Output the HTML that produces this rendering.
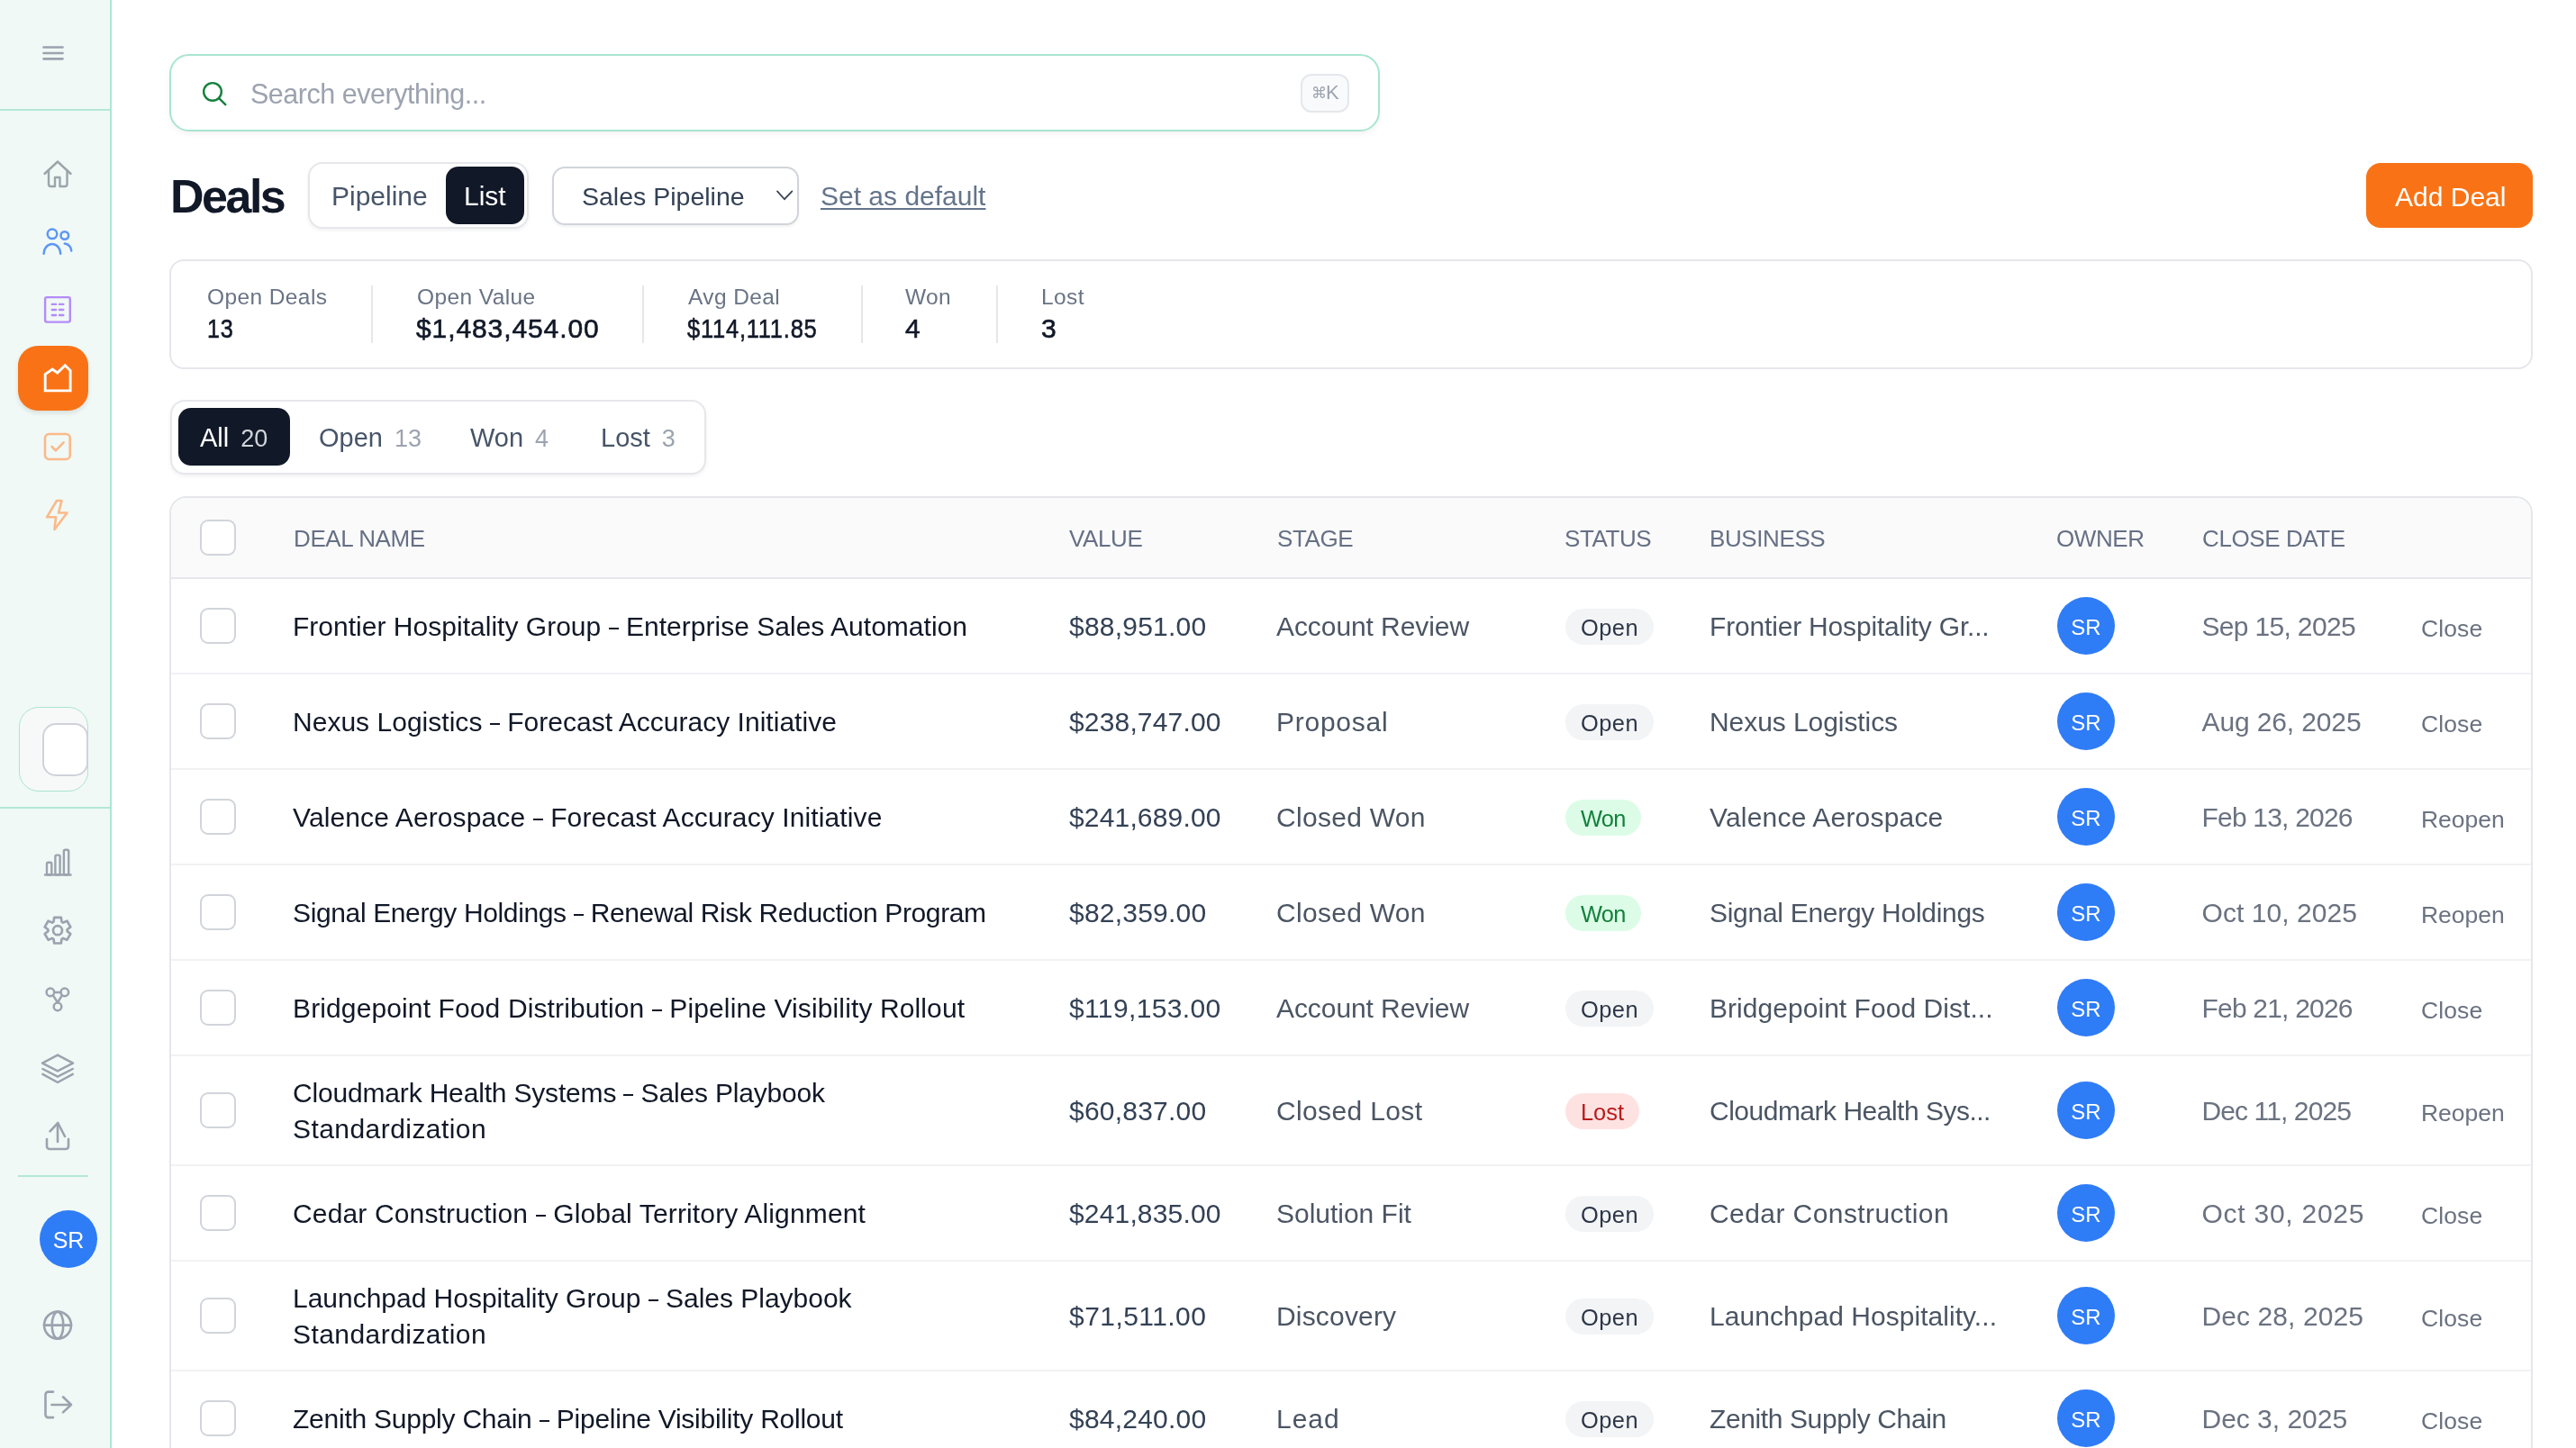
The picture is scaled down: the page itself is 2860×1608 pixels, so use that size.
<!DOCTYPE html>
<html><head><meta charset="utf-8">
<style>
*{box-sizing:border-box;margin:0;padding:0}
html,body{width:2860px;height:1608px;overflow:hidden;background:#fff;font-family:"Liberation Sans",sans-serif;color:#111827}
.abs{position:absolute}
.t{position:absolute;white-space:nowrap;line-height:1}
#side{position:absolute;left:0;top:0;width:124px;height:1608px;background:#f0f9f5;border-right:2px solid #abe7d3}
.ic{position:absolute;width:40px;height:40px;left:44px}
.ic svg{width:40px;height:40px;display:block;fill:none;stroke-width:2;stroke-linecap:round;stroke-linejoin:round}
.row{position:absolute;left:190px;width:2620px;border-bottom:2px solid #f1f2f4;background:#fff}
.row>*{position:absolute}
.tx{white-space:nowrap;line-height:40px;font-size:30px;margin-top:0.7px}
.d{display:inline-block;width:11px;height:2.6px;background:currentColor;margin-bottom:6.5px}
.cb{left:32px;width:40px;height:40px;border:2px solid #d1d5db;border-radius:9px;background:#fff}
.nm{left:135px;color:#111827}
.val{left:997px;color:#334155}
.stg{left:1227px;color:#4b5563}
.bus{left:1708px;color:#4b5563}
.dt{left:2254.5px;color:#6b7280}
.act{left:2498px;color:#6b7280;font-size:26.5px;margin-top:3px}
.badge{left:1548px;margin-top:1px;height:40px;line-height:43px;border-radius:20px;padding:0 17px;font-size:25.4px}
.badge.open{background:#f3f4f6;color:#2d3748;letter-spacing:0.5px}
.badge.won{background:#dcfce7;color:#15803d;letter-spacing:-0.75px}
.badge.lost{background:#fee2e2;color:#b91c1c}
.av{left:2094px;width:64px;height:64px;border-radius:50%;background:#2f7cf7;color:#fff;font-size:24px;line-height:68px;text-align:center}
.th{position:absolute;top:585px;font-size:26px;line-height:1;color:#667085;letter-spacing:-0.4px;margin-left:-1px;white-space:nowrap}
.sl{position:absolute;top:318px;font-size:24.5px;line-height:1;color:#687384;letter-spacing:0.4px;white-space:nowrap}
.sv{position:absolute;top:350px;font-size:30px;line-height:1;color:#111827;-webkit-text-stroke:0.6px #111827;letter-spacing:0.9px;white-space:nowrap}
.n1{font-style:normal;margin:0 -2.5px}
.sd{position:absolute;top:317px;width:2px;height:64px;background:#e5e7eb}
.tab{position:absolute;top:471.5px;font-size:29px;line-height:1;color:#475569;white-space:nowrap}
.tab span{font-size:27px;color:#9ca3af;margin-left:13px}
#wrap{position:absolute;left:0;top:0;width:2860px;height:1608px;overflow:hidden;will-change:transform}
@media (max-width:2000px){html{zoom:0.5}}
</style></head><body><div id="wrap">
<div id="side">
  <div class="abs" style="left:0;top:121px;width:122px;height:2px;background:#b3e8d4"></div>
  <div class="abs" style="left:0;top:895.5px;width:122px;height:2px;background:#b3e8d4"></div>
  <div class="abs" style="left:20px;top:1305px;width:78px;height:2px;background:#b3e8d4"></div>
  <div class="abs" style="left:20.5px;top:784.5px;width:77px;height:94.5px;border-radius:22px;border:1.5px solid #a9e6cf;background:#f7f9f8"></div>
  <div class="abs" style="left:46.5px;top:802.5px;width:51px;height:59px;border-radius:15px;border:2px solid #cfd2da;background:#fff"></div>
  <div class="abs" style="left:20px;top:384px;width:78px;height:72px;border-radius:22px;background:#f97316;box-shadow:0 3px 5px rgba(0,0,0,0.10)"></div>
  <div class="abs" style="left:44px;top:1344px;width:64px;height:64px;border-radius:50%;background:#2f7cf7;color:#fff;font-size:25px;line-height:67px;text-align:center">SR</div>
  <svg class="abs" style="left:0;top:0" width="124" height="1608" viewBox="0 0 124 1608" fill="none" stroke-linecap="round" stroke-linejoin="round">
    <g stroke="#9ca3af" stroke-width="2.7"><path d="M48.5 52.5h21M48.5 59h21M48.5 65.3h21"/></g>
    <g stroke="#9aa5ab" stroke-width="2.4"><path d="M49.5 193 64 179.5 78.5 193"/><path d="M54 189v15.5a2.5 2.5 0 0 0 2.5 2.5H61v-10h5.5v10h5.5a2.5 2.5 0 0 0 2.5-2.5V189"/></g>
    <g stroke="#5e96f7" stroke-width="2.5"><circle cx="58" cy="259.8" r="5.3"/><circle cx="71.8" cy="261.5" r="4.3"/><path d="M48.6 281.8a9.3 10.8 0 0 1 18.6 0"/><path d="M71.8 270.5a8 8 0 0 1 7.4 8"/></g>
    <g stroke="#b48cf9" stroke-width="2.4"><rect x="50.1" y="330.1" width="27.7" height="27.5" rx="2"/><path d="M57.8 337.9h4.3M66 337.9h4.3M57.8 344h4.3M66 344h4.3M57.8 350h4.3M66 350h4.3"/></g>
    <g stroke="#fff" stroke-width="2.9" stroke-linejoin="miter" stroke-linecap="butt"><path d="M50.2 415.6 58.2 410.1 63.7 414 72.3 405.7 78.1 411.5V433.9H50.2Z"/></g>
    <g stroke="#fbb98a" stroke-width="2.6"><rect x="50" y="482" width="27.7" height="28" rx="4.5"/><path d="M57.6 496 61.9 500.3 70.6 491.3"/></g>
    <g stroke="#fbb98a" stroke-width="2.6"><path d="M52 574.3 63 556 68.5 556 65 569.5H74.5L60.5 588 62 574.3Z"/></g>
    <g stroke="#9ca3af" stroke-width="2.4"><path d="M50 971.5h28.5"/><rect x="52" y="957.8" width="5.3" height="13.7" rx="1.5"/><rect x="61.4" y="949.6" width="5.2" height="21.9" rx="1.5"/><rect x="70.9" y="943.8" width="5.3" height="27.7" rx="1.5"/></g>
    <g stroke="#9ca3af" stroke-width="2.7"><path d="M59.52 1023.59 L60.17 1018.90 L67.83 1018.90 L68.48 1023.59 L70.08 1024.52 L74.47 1022.73 L78.30 1029.37 L74.56 1032.28 L74.56 1034.12 L78.30 1037.03 L74.47 1043.67 L70.08 1041.88 L68.48 1042.81 L67.83 1047.50 L60.17 1047.50 L59.52 1042.81 L57.92 1041.88 L53.53 1043.67 L49.70 1037.03 L53.44 1034.12 L53.44 1032.28 L49.70 1029.37 L53.53 1022.73 L57.92 1024.52Z"/><circle cx="64" cy="1033.2" r="5"/></g>
    <g stroke="#9ca3af" stroke-width="2.5"><circle cx="55.9" cy="1101.9" r="4.3"/><circle cx="71.8" cy="1101.9" r="4.3"/><circle cx="64" cy="1117.9" r="4.3"/><path d="M60.2 1101.9h7.3M58.8 1105.2 63.8 1113M69 1105.2 64.2 1113"/></g>
    <g stroke="#9ca3af" stroke-width="2.5"><path d="M64 1171.6 47 1180.7 64 1189.4 81 1180.7Z"/><path d="M47.4 1187 64 1195.7 80.8 1187"/><path d="M47.4 1192.8 64 1202 80.8 1192.8"/></g>
    <g stroke="#9ca3af" stroke-width="2.6"><path d="M52 1265v8a3 3 0 0 0 3 3h18a3 3 0 0 0 3-3v-8"/><path d="M55.5 1256.3 64.3 1247 72 1262"/><path d="M64 1248v20"/></g>
    <g stroke="#9ca3af" stroke-width="2.6"><circle cx="64" cy="1471.6" r="15"/><path d="M49 1471.6h30"/><ellipse cx="64" cy="1471.6" rx="6.3" ry="15"/></g>
    <g stroke="#9ca3af" stroke-width="2.6"><path d="M59 1545.6h-5.5a3 3 0 0 0-3 3v22.5a3 3 0 0 0 3 3H59"/><path d="M57.4 1560h21.6M70 1551.3l9 8.7-9 8.4"/></g>
  </svg>
</div>

<!-- search -->
<div class="abs" style="left:188px;top:60px;width:1344px;height:86px;border:2.5px solid #a8e5cf;border-radius:22px;box-shadow:0 3px 6px rgba(0,0,0,0.05);background:#fff"></div>
<svg class="abs" style="left:200px;top:80px;width:70px;height:50px" viewBox="200 80 70 50" fill="none" stroke="#15803d" stroke-width="2.4" stroke-linecap="round"><circle cx="236" cy="101.9" r="9.8"/><path d="M243.4 109.3 250.3 116.2"/></svg>
<div class="t" style="left:278px;top:89px;font-size:30.5px;color:#9ca3af;letter-spacing:-0.48px">Search everything...</div>
<div class="abs" style="left:1444px;top:82px;width:54px;height:43px;border:2px solid #e5e7eb;border-radius:12px;background:#f9fafb"></div>
<div class="t" style="left:1456px;top:92px;font-size:22px;color:#9ca3af;letter-spacing:-1px"><span style="font-size:17px;vertical-align:1px">⌘</span>K</div>

<!-- header -->
<div class="t" style="left:189px;top:192px;font-size:52px;font-weight:bold;letter-spacing:-2.5px">Deals</div>
<div class="abs" style="left:342px;top:179.5px;width:244.5px;height:74px;border:2px solid #e5e7eb;border-radius:16px;background:#fff;box-shadow:0 2px 4px rgba(0,0,0,0.06)"></div>
<div class="t" style="left:368px;top:202.6px;font-size:30px;color:#475569">Pipeline</div>
<div class="abs" style="left:495px;top:185px;width:87px;height:64px;border-radius:14px;background:#111827"></div>
<div class="t" style="left:515px;top:202.6px;font-size:30px;color:#fff">List</div>

<div class="abs" style="left:613px;top:184.5px;width:274px;height:65px;border:2px solid #d1d5db;border-radius:14px;background:#fff;box-shadow:0 2px 3px rgba(0,0,0,0.06)"></div>
<div class="t" style="left:646px;top:204px;font-size:28.5px;color:#334155">Sales Pipeline</div>
<svg class="abs" style="left:860px;top:207px;width:22px;height:20px" viewBox="0 0 22 20" fill="none" stroke="#374151" stroke-width="1.7" stroke-linecap="round"><path d="M3 5.4l8 8.8 8.4-8.8"/></svg>
<div class="t" style="left:911px;top:202.6px;font-size:30px;color:#64748b;text-decoration:underline;text-underline-offset:3px;text-decoration-thickness:2px">Set as default</div>

<div class="abs" style="left:2627px;top:181px;width:185px;height:72px;border-radius:16px;background:#f97316"></div>
<div class="t" style="left:2659px;top:203.6px;font-size:30px;color:#fff">Add Deal</div>

<!-- stats -->
<div class="abs" style="left:188px;top:288px;width:2624px;height:122px;border:2px solid #e5e7eb;border-radius:16px;background:#fff"></div>
<div class="sl" style="left:230px">Open Deals</div><div class="sv" style="left:230px;transform:scaleX(0.84);transform-origin:0 0">13</div>
<div class="sd" style="left:412px"></div>
<div class="sl" style="left:463px">Open Value</div><div class="sv" style="left:462px;letter-spacing:0.9px">$1,483,454.00</div>
<div class="sd" style="left:713px"></div>
<div class="sl" style="left:764px">Avg Deal</div><div class="sv" style="left:763px;transform:scaleX(0.85);transform-origin:0 0">$114,111.85</div>
<div class="sd" style="left:956px"></div>
<div class="sl" style="left:1005px">Won</div><div class="sv" style="left:1005px">4</div>
<div class="sd" style="left:1106px"></div>
<div class="sl" style="left:1156px">Lost</div><div class="sv" style="left:1156px">3</div>

<!-- tabs -->
<div class="abs" style="left:189px;top:444px;width:595px;height:83px;border:2px solid #e5e7eb;border-radius:16px;background:#fff;box-shadow:0 2px 4px rgba(0,0,0,0.06)"></div>
<div class="abs" style="left:198px;top:453px;width:124px;height:64px;border-radius:14px;background:#111827"></div>
<div class="tab" style="left:222px;color:#fff">All<span style="color:#d1d5db">20</span></div>
<div class="tab" style="left:354px">Open<span>13</span></div>
<div class="tab" style="left:522px">Won<span>4</span></div>
<div class="tab" style="left:667px">Lost<span>3</span></div>

<!-- table -->
<div class="abs" style="left:188px;top:551px;width:2624px;height:1100px;border:2px solid #e5e7eb;border-radius:19px;background:#fff;overflow:hidden">
  <div class="abs" style="left:0;top:0;width:2620px;height:90px;background:#fafafa;border-bottom:2px solid #e5e7eb"></div>
</div>
<div class="abs" style="left:222px;top:577px;width:40px;height:40px;border:2px solid #d1d5db;border-radius:9px;background:#fff"></div>
<div class="th" style="left:327px">DEAL NAME</div>
<div class="th" style="left:1188px">VALUE</div>
<div class="th" style="left:1419px">STAGE</div>
<div class="th" style="left:1738px">STATUS</div>
<div class="th" style="left:1899px">BUSINESS</div>
<div class="th" style="left:2284px">OWNER</div>
<div class="th" style="left:2446px">CLOSE DATE</div>

<div class="row" style="top:643px;height:106px">
<div class="cb" style="top:32.0px"></div>
<div class="tx nm" style="top:32.0px;letter-spacing:0.018px;">Frontier Hospitality Group <i class="d"></i> Enterprise Sales Automation</div>
<div class="tx val" style="top:32.0px;letter-spacing:0.222px;">$88,951.00</div>
<div class="tx stg" style="top:32.0px;letter-spacing:-0.077px;">Account Review</div>
<div class="badge open" style="top:32.0px">Open</div>
<div class="tx bus" style="top:32.0px;letter-spacing:-0.176px;">Frontier Hospitality Gr...</div>
<div class="av" style="top:20.0px">SR</div>
<div class="tx dt" style="top:32.0px;letter-spacing:-0.673px;">Sep 15, 2025</div>
<div class="tx act" style="top:32.0px;letter-spacing:0.100px;">Close</div>
</div>
<div class="row" style="top:749px;height:106px">
<div class="cb" style="top:32.0px"></div>
<div class="tx nm" style="top:32.0px;letter-spacing:0.022px;">Nexus Logistics <i class="d"></i> Forecast Accuracy Initiative</div>
<div class="tx val" style="top:32.0px;letter-spacing:0.160px;">$238,747.00</div>
<div class="tx stg" style="top:32.0px;letter-spacing:0.743px;">Proposal</div>
<div class="badge open" style="top:32.0px">Open</div>
<div class="tx bus" style="top:32.0px;letter-spacing:-0.071px;">Nexus Logistics</div>
<div class="av" style="top:20.0px">SR</div>
<div class="tx dt" style="top:32.0px;letter-spacing:-0.127px;">Aug 26, 2025</div>
<div class="tx act" style="top:32.0px;letter-spacing:0.100px;">Close</div>
</div>
<div class="row" style="top:855px;height:106px">
<div class="cb" style="top:32.0px"></div>
<div class="tx nm" style="top:32.0px;letter-spacing:0.115px;">Valence Aerospace <i class="d"></i> Forecast Accuracy Initiative</div>
<div class="tx val" style="top:32.0px;letter-spacing:0.160px;">$241,689.00</div>
<div class="tx stg" style="top:32.0px;letter-spacing:0.289px;">Closed Won</div>
<div class="badge won" style="top:32.0px">Won</div>
<div class="tx bus" style="top:32.0px;letter-spacing:0.188px;">Valence Aerospace</div>
<div class="av" style="top:20.0px">SR</div>
<div class="tx dt" style="top:32.0px;letter-spacing:-0.800px;">Feb 13, 2026</div>
<div class="tx act" style="top:32.0px;letter-spacing:-0.040px;">Reopen</div>
</div>
<div class="row" style="top:961px;height:106px">
<div class="cb" style="top:32.0px"></div>
<div class="tx nm" style="top:32.0px;letter-spacing:-0.370px;">Signal Energy Holdings <i class="d"></i> Renewal Risk Reduction Program</div>
<div class="tx val" style="top:32.0px;letter-spacing:0.222px;">$82,359.00</div>
<div class="tx stg" style="top:32.0px;letter-spacing:0.289px;">Closed Won</div>
<div class="badge won" style="top:32.0px">Won</div>
<div class="tx bus" style="top:32.0px;letter-spacing:-0.286px;">Signal Energy Holdings</div>
<div class="av" style="top:20.0px">SR</div>
<div class="tx dt" style="top:32.0px;letter-spacing:0.055px;">Oct 10, 2025</div>
<div class="tx act" style="top:32.0px;letter-spacing:-0.040px;">Reopen</div>
</div>
<div class="row" style="top:1067px;height:106px">
<div class="cb" style="top:32.0px"></div>
<div class="tx nm" style="top:32.0px;letter-spacing:0.121px;">Bridgepoint Food Distribution <i class="d"></i> Pipeline Visibility Rollout</div>
<div class="tx val" style="top:32.0px;letter-spacing:0.360px;">$119,153.00</div>
<div class="tx stg" style="top:32.0px;letter-spacing:-0.077px;">Account Review</div>
<div class="badge open" style="top:32.0px">Open</div>
<div class="tx bus" style="top:32.0px;letter-spacing:0.043px;">Bridgepoint Food Dist...</div>
<div class="av" style="top:20.0px">SR</div>
<div class="tx dt" style="top:32.0px;letter-spacing:-0.800px;">Feb 21, 2026</div>
<div class="tx act" style="top:32.0px;letter-spacing:0.100px;">Close</div>
</div>
<div class="row" style="top:1173px;height:122px">
<div class="cb" style="top:40.0px"></div>
<div class="tx nm" style="top:20.0px;letter-spacing:-0.175px;">Cloudmark Health Systems <i class="d"></i> Sales Playbook</div>
<div class="tx nm" style="top:60.0px;letter-spacing:0.443px;">Standardization</div>
<div class="tx val" style="top:40.0px;letter-spacing:0.222px;">$60,837.00</div>
<div class="tx stg" style="top:40.0px;letter-spacing:0.360px;">Closed Lost</div>
<div class="badge lost" style="top:40.0px">Lost</div>
<div class="tx bus" style="top:40.0px;letter-spacing:-0.500px;">Cloudmark Health Sys...</div>
<div class="av" style="top:28.0px">SR</div>
<div class="tx dt" style="top:40.0px;letter-spacing:-0.891px;">Dec 11, 2025</div>
<div class="tx act" style="top:40.0px;letter-spacing:-0.040px;">Reopen</div>
</div>
<div class="row" style="top:1295px;height:106px">
<div class="cb" style="top:32.0px"></div>
<div class="tx nm" style="top:32.0px;letter-spacing:0.152px;">Cedar Construction <i class="d"></i> Global Territory Alignment</div>
<div class="tx val" style="top:32.0px;letter-spacing:0.160px;">$241,835.00</div>
<div class="tx stg" style="top:32.0px;letter-spacing:-0.018px;">Solution Fit</div>
<div class="badge open" style="top:32.0px">Open</div>
<div class="tx bus" style="top:32.0px;letter-spacing:0.424px;">Cedar Construction</div>
<div class="av" style="top:20.0px">SR</div>
<div class="tx dt" style="top:32.0px;letter-spacing:0.745px;">Oct 30, 2025</div>
<div class="tx act" style="top:32.0px;letter-spacing:0.100px;">Close</div>
</div>
<div class="row" style="top:1401px;height:122px">
<div class="cb" style="top:40.0px"></div>
<div class="tx nm" style="top:20.0px;letter-spacing:-0.019px;">Launchpad Hospitality Group <i class="d"></i> Sales Playbook</div>
<div class="tx nm" style="top:60.0px;letter-spacing:0.443px;">Standardization</div>
<div class="tx val" style="top:40.0px;letter-spacing:0.444px;">$71,511.00</div>
<div class="tx stg" style="top:40.0px;letter-spacing:0.175px;">Discovery</div>
<div class="badge open" style="top:40.0px">Open</div>
<div class="tx bus" style="top:40.0px;letter-spacing:0.043px;">Launchpad Hospitality...</div>
<div class="av" style="top:28.0px">SR</div>
<div class="tx dt" style="top:40.0px;letter-spacing:0.091px;">Dec 28, 2025</div>
<div class="tx act" style="top:40.0px;letter-spacing:0.100px;">Close</div>
</div>
<div class="row" style="top:1523px;height:106px">
<div class="cb" style="top:32.0px"></div>
<div class="tx nm" style="top:32.0px;letter-spacing:-0.242px;">Zenith Supply Chain <i class="d"></i> Pipeline Visibility Rollout</div>
<div class="tx val" style="top:32.0px;letter-spacing:0.222px;">$84,240.00</div>
<div class="tx stg" style="top:32.0px;letter-spacing:1.000px;">Lead</div>
<div class="badge open" style="top:32.0px">Open</div>
<div class="tx bus" style="top:32.0px;letter-spacing:-0.389px;">Zenith Supply Chain</div>
<div class="av" style="top:20.0px">SR</div>
<div class="tx dt" style="top:32.0px;letter-spacing:-0.020px;">Dec 3, 2025</div>
<div class="tx act" style="top:32.0px;letter-spacing:0.100px;">Close</div>
</div>
</div></body></html>
